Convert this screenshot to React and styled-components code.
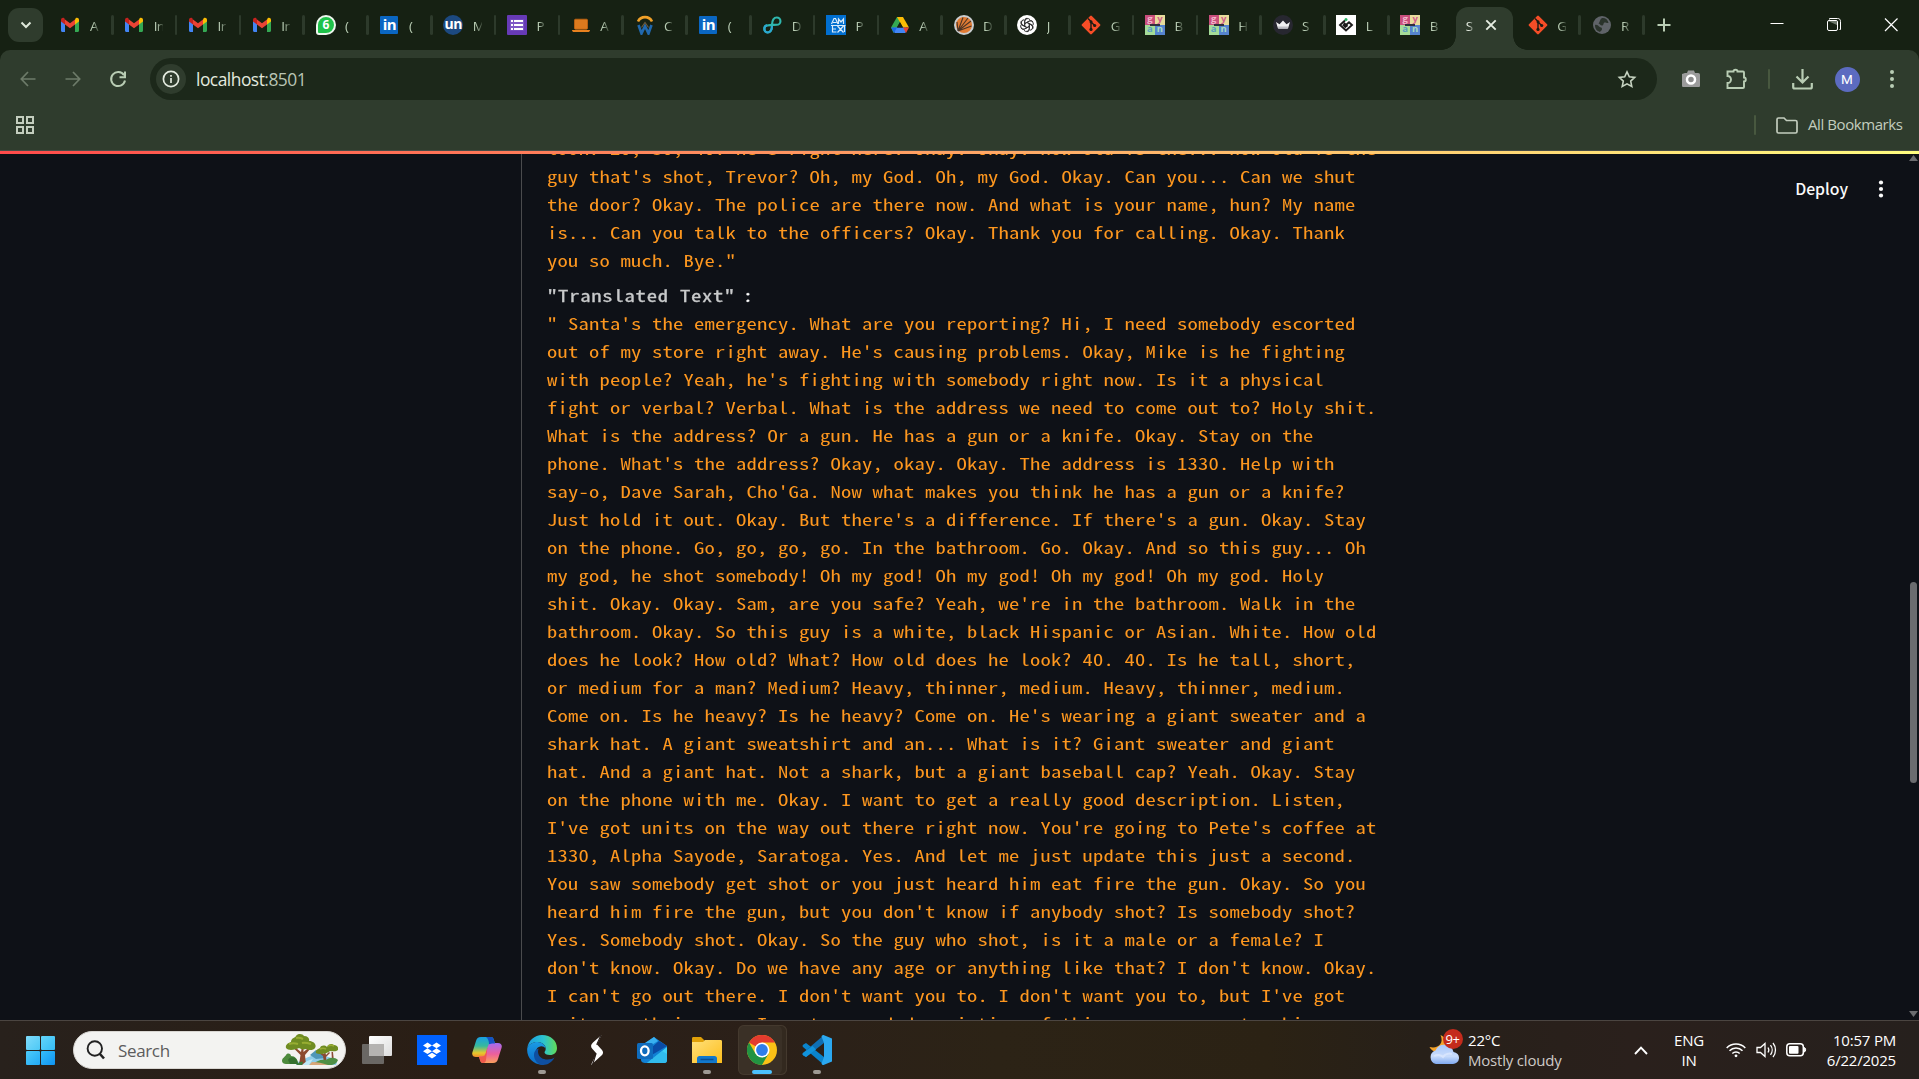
import React from "react";
import styled, { createGlobalStyle, css } from "styled-components";

const UI_FONT = '"Open Sans", "Noto Sans", sans-serif';
const MONO_FONT = '"Noto Sans Mono CJK SC", "DejaVu Sans Mono", monospace';

const Global = createGlobalStyle`
  * { box-sizing: border-box; }
  html, body { margin: 0; padding: 0; background: #0e1117; overflow: hidden; }
  svg { display: block; flex: none; }
`;

const Desktop = styled.div`
  display: flex;
  flex-direction: column;
  width: 1919px;
  height: 1079px;
  overflow: hidden;
  font-family: ${UI_FONT};
`;

/* ---------- browser chrome ---------- */

const TabStrip = styled.div`
  display: flex;
  align-items: center;
  flex: none;
  height: 50px;
  background: #162113;
`;

const TabSearch = styled.div`
  display: grid;
  place-items: center;
  flex: none;
  width: 35px;
  height: 34px;
  margin: 0 6.8px 0 8px;
  border-radius: 11px;
  background: #2f3c2d;
`;

const Tab = styled.div`
  display: flex;
  align-items: center;
  flex: none;
  width: 63.8px;
  height: 50px;
  padding-left: 10.6px;
`;

const TabLabel = styled.span`
  flex: none;
  width: 9px;
  margin-left: 9.5px;
  white-space: nowrap;
  font-size: 13.5px;
  line-height: 20px;
  letter-spacing: -0.6px;
  padding-top: 1px;
  color: #b9cdb4;
  mask-image: linear-gradient(90deg, #000 30%, rgba(0, 0, 0, 0.2));
`;

const TabSeparator = styled.i`
  flex: none;
  width: 2.5px;
  height: 20px;
  margin-left: auto;
  border-radius: 2px;
  background: ${(p) => (p.$hidden ? "transparent" : "#2d3a2b")};
`;

const ActiveTab = styled.div`
  position: relative;
  display: flex;
  align-items: center;
  flex: none;
  width: 57px;
  height: 43px;
  margin: 7px 3.9px 0 2.9px;
  padding: 0 0 7px 9.500px;
  gap: 12.5px;
  border-radius: 12px 12px 0 0;
  background: #2f3c2d;
  &::before, &::after {
    content: "";
    position: absolute;
    bottom: 0;
    width: 14px;
    height: 14px;
  }
  &::before { left: -14px; background: radial-gradient(circle at 0 0, transparent 13.5px, #2f3c2d 14px); }
  &::after { right: -14px; background: radial-gradient(circle at 100% 0, transparent 13.5px, #2f3c2d 14px); }
`;

const ActiveLabel = styled(TabLabel)`
  width: 8px;
  margin: 0 -1px 0 0;
  color: #e3eadf;
`;

const WindowButtons = styled.div`
  display: flex;
  align-items: center;
  margin-left: auto;
  svg { width: 57px; height: 50px; }
`;

const ToolbarBack = styled.div`
  flex: none;
  background: #162113;
`;

const Toolbar = styled.div`
  display: flex;
  align-items: center;
  height: 58px;
  border-radius: 10px 10px 0 0;
  background: #2f3c2d;
`;

const NavButton = styled.div`
  display: grid;
  place-items: center;
  flex: none;
  width: 45px;
`;

const Omnibox = styled.div`
  display: flex;
  align-items: center;
  flex: none;
  width: 1507px;
  height: 42px;
  padding: 0 16px 0 6px;
  margin-left: 10px;
  border-radius: 21px;
  background: #1c281a;
`;

const SiteInfo = styled.div`
  display: grid;
  place-items: center;
  width: 30px;
  height: 30px;
  border-radius: 50%;
  background: #2f3c2d;
`;

const Url = styled.span`
  flex: 1;
  margin-left: 10px;
  font-size: 17.4px;
  line-height: 24px;
  letter-spacing: -0.5px;
  color: #e3eadf;
`;

const Port = styled.span`
  color: #b9c4b4;
`;

const ToolbarItem = styled.div`
  display: grid;
  place-items: center;
  flex: none;
  width: ${(p) => p.$w}px;
`;

const Divider = styled.i`
  flex: none;
  width: 2px;
  height: 20px;
  border-radius: 1px;
  background: #48583f;
`;

const Avatar = styled.div`
  display: grid;
  place-items: center;
  width: 25px;
  height: 25px;
  border-radius: 50%;
  background: #5c6bc0;
  color: #fff;
  font: 13.5px Roboto, sans-serif;
`;

const Bookmarks = styled.div`
  display: flex;
  align-items: center;
  flex: none;
  height: 43px;
  padding: 0 16.5px 8px 14.5px;
  background: #2f3c2d;
  border-bottom: 1px solid #474d47;
`;

const AllBookmarks = styled.div`
  display: flex;
  align-items: center;
  margin-left: auto;
  font-size: 15px;
  line-height: 18px;
  letter-spacing: -0.42px;
  color: #c3cdbe;
  svg { margin: 0 10px 0 20px; }
`;

const BookmarksLabel = styled.span`
  padding-bottom: 2px;
`;

/* ---------- page ---------- */

const Decoration = styled.div`
  flex: none;
  height: 3px;
  background: linear-gradient(90deg, #ff4b4b, #fffd80);
`;

const Page = styled.main`
  display: flex;
  flex: none;
  height: 866px;
  overflow: hidden;
  background: #0e1117;
`;

const JsonViewer = styled.section`
  flex: none;
  width: 862px;
  height: 900px;
  margin-left: 521px;
  padding-left: 25px;
  border-left: 1px solid #4a4b4d;
  font-family: ${MONO_FONT};
`;

/* The mono face is half-width, so each block is stretched to a 10.5px pitch. */
const JsonText = styled.div`
  width: 672px;
  margin-top: ${(p) => p.$top || 0}px;
  font-size: 16.5px;
  line-height: 28px;
  letter-spacing: 0.15px;
  white-space: pre;
  color: #fd971f;
  transform: scaleX(1.25);
  transform-origin: 0 0;
`;

const JsonKey = styled(JsonText)`
  letter-spacing: 0.61px;
  color: #c9cbcc;
  -webkit-text-stroke: 0.3px #c9cbcc;
`;

const Colon = styled.span`
  margin-left: 6px;
  color: #fff;
`;

const PageHeader = styled.header`
  display: flex;
  align-items: flex-start;
  justify-content: flex-end;
  flex: 1;
  padding: 21px 22px 0 0;
  gap: 29px;
`;

const Deploy = styled.span`
  font: 500 15.8px/28px "Noto Sans CJK SC", "Open Sans", sans-serif;
  color: #fafafa;
`;

const ScrollTrack = styled.div`
  display: flex;
  flex-direction: column;
  align-items: center;
  width: 12px;
  padding: 1px 0 3px;
`;

const ScrollThumb = styled.div`
  width: 7px;
  height: 201px;
  margin-top: 421px;
  margin-bottom: auto;
  border-radius: 4px;
  background: #6b6c6f;
`;

/* ---------- taskbar ---------- */

const Taskbar = styled.footer`
  display: flex;
  align-items: center;
  flex: none;
  height: 59px;
  border-top: 1px solid #4b4541;
  background: linear-gradient(90deg, #28211c 0, #2a1e15 24%, #2b2019 40%, #2c2316 52%, #2b2214 66%, #272019 74%, #2a201c 85%, #26201d 100%);
  color: #fff;
`;

const StartButton = styled.div`
  display: grid;
  grid-template-columns: 14px 14px;
  grid-template-rows: 14px 14px;
  gap: 1px;
  margin: 0 18px 0 26px;
`;

const Pane = styled.i`
  border-radius: 1px;
  background: ${(p) => p.$c};
`;

const SearchBox = styled.div`
  display: flex;
  align-items: center;
  flex: none;
  width: 273px;
  height: 38px;
  padding: 0 7px 0 12px;
  margin-right: 3.5px;
  border-radius: 19px;
  background: #f3f3f1;
  border: 1px solid #d8d6d2;
  color: #5c5c5c;
  font-size: 17px;
  letter-spacing: -0.35px;
`;

const SearchText = styled.span`
  flex: 1;
  margin-left: 12px;
`;

const TaskSlot = styled.div`
  display: flex;
  flex-direction: column;
  align-items: center;
  flex: none;
  width: 55px;
  height: 50px;
  padding-top: 10px;
  ${(p) => p.$active && css`
    width: 49px;
    margin: 0 3px;
    padding-right: 1px;
    border-radius: 6px;
    background: #3a3026;
    box-shadow: inset 0 0 0 1px #44392e, inset -5px 0 0 0 #33291f;
  `}
`;

const RunMark = styled.i`
  width: ${(p) => (p.$wide ? 20 : 8)}px;
  height: 4px;
  margin-top: 5px;
  border-radius: 2px;
  background: ${(p) => (p.$wide ? "#4cc2ff" : "#9e9993")};
`;

const Weather = styled.div`
  display: flex;
  align-items: center;
  margin-left: auto;
  width: 205px;
`;

const WeatherIcon = styled.div`
  position: relative;
  width: 30px;
  height: 40px;
  margin-right: 9px;
`;

const Badge = styled.span`
  position: absolute;
  left: 13.5px;
  top: -1px;
  display: grid;
  place-items: center;
  width: 20px;
  height: 20px;
  border-radius: 50%;
  background: #c42b1c;
  color: #fff;
  font-size: 13px;
  letter-spacing: -0.5px;
`;

const Lines = styled.div`
  padding-bottom: 1px;
  font-size: 15px;
  line-height: 20px;
  letter-spacing: -0.2px;
  text-align: ${(p) => p.$align || "left"};
  white-space: nowrap;
  span { display: block; }
  span + span { color: ${(p) => p.$second || "#fff"}; }
`;

const Tray = styled.div`
  display: flex;
  align-items: center;
  flex: none;
  width: 285px;
  padding-right: 23px;
`;

const TrayIcons = styled.div`
  display: flex;
  align-items: center;
  gap: 9.5px;
  margin: 0 auto 0 20px;
`;

const Language = styled(Lines)`
  width: 34px;
  margin-left: 24px;
`;

/* ---------- favicons ---------- */

const Ico = ({ children, size = 20, vb = 20, h }) => (
  <svg width={size} height={h || size} viewBox={`0 0 ${vb} ${vb}`} fill="none">{children}</svg>
);

const Gmail = () => (
  <Ico>
    <path d="M1 5.5v10c0 .8.6 1.5 1.4 1.5H5V8.5z" fill="#4285f4" />
    <path d="M19 5.500v10c0 .8-.6 1.500-1.400 1.500H15V8.500z" fill="#34a853" />
    <path d="M15 4.500v5L19 6.500V4.800c0-1.800-2-2.600-3.300-1.500z" fill="#fbbc04" />
    <path d="M5 9.500v-5l5 3.700 5-3.700v5l-5 3.700z" fill="#ea4335" />
    <path d="M1 4.800v1.700l4 3v-5l-.7-1.200C3 2.200 1 3 1 4.800z" fill="#c5221f" />
  </Ico>
);
const BadgeGlyph = styled.div`
  display: grid;
  place-items: center;
  flex: none;
  width: ${(p) => p.$s || 20}px;
  height: ${(p) => p.$s || 20}px;
  margin: 0 ${(p) => (20 - (p.$s || 20)) / 2}px;
  border-radius: ${(p) => p.$r || 0};
  background: ${(p) => p.$bg};
  color: #fff;
  font: 700 ${(p) => p.$f || 13}px/1 "Open Sans", sans-serif;
  letter-spacing: -0.5px;
  padding-bottom: ${(p) => p.$pb || 0}px;
  border: ${(p) => p.$b || "none"};
`;
const WhatsApp = () => <BadgeGlyph $bg="#1fc24a" $r="50% 50% 50% 15%" $f={12} $b="2px solid #eef6ee">6</BadgeGlyph>;
const LinkedIn = () => <BadgeGlyph $bg="#0a66c2" $r="1px" $f={15} $s={18} $pb={2}>in</BadgeGlyph>;
const Unstop = () => <BadgeGlyph $bg="#1c4980" $r="50%" $f={14} $pb={3}>un</BadgeGlyph>;
const Forms = () => (
  <Ico>
    <rect width="20" height="20" rx="1" fill="#673ab7" />
    <path d="M3 4.500h14v11H3z" fill="#7f58c6" />
    <path d="M4 5h2v2H4zM7 5h9v2H7zM4 9h2v2H4zM7 9h9v2H7zM4 13h2v2H4zM7 13h9v2H7z" fill="#fff" />
  </Ico>
);
const Laptop = () => (
  <Ico>
    <rect x="3.500" y="4.200" width="13" height="10" rx="1" fill="#dc7a1e" stroke="#c46410" strokeWidth=".8" />
    <path d="M1 15h18c0 1.500-1 2-2 2H3c-1 0-2-.500-2-2z" fill="#e8811f" />
  </Ico>
);
const Coursera = () => (
  <Ico>
    <path d="M3 6.500a7.800 7.800 0 0 1 14 0" stroke="#f0a028" strokeWidth="2.600" />
    <path d="M3.500 10l3 8.500L10 11l3.500 7.500 3-8.500" stroke="#2168ae" strokeWidth="2.600" />
    <path d="M6.500 12.500L10 7.500l3.500 5" stroke="#6b5a3c" strokeWidth="1.200" />
  </Ico>
);
const Loop = () => (
  <Ico>
    <path d="M10 10c0-5 2-7.500 4.800-7.500a3.600 3.600 0 0 1 0 7.300C12 10 8 9.600 5.200 10.400a3.600 3.600 0 0 0 .3 7.100C8.500 17.500 10 15 10 10z" stroke="#2fb7ae" strokeWidth="2.100" />
    <path d="M5.200 10.400a3.600 3.600 0 0 0 .3 7.100C8.500 17.500 10 15 10 11" stroke="#2aa7d0" strokeWidth="2.100" />
  </Ico>
);
const Amex = () => (
  <Ico>
    <rect width="20" height="20" fill="#016fd0" />
    <g stroke="#d9ebfa" strokeWidth="1.200">
      <path d="M5.500 9l2.500-5.500h1.500L12 9M7 7.500h3.500M12.500 9V4l2.500 3 2.500-3v5M5 10.500h14.500" />
      <path d="M6.500 11v6h4M6.500 14h3.500M11.500 11l6 6.500M17.500 11l-6 6.500M18.500 11v6" />
    </g>
  </Ico>
);
const Drive = () => (
  <Ico>
    <path d="M7 2h6l-6.500 11-3 5L1 12.500z" fill="#34a853" />
    <path d="M7 2h6l6 10.500h-6z" fill="#fbbc04" />
    <path d="M4 12.500h12L15.500 18h-11z" fill="#4285f4" />
    <path d="M1 12.500h6L4 18z" fill="#1a67e8" />
    <path d="M13 12.500h6L16 18z" fill="#ea4335" />
    <path d="M10 7.300l3 5.200H7z" fill="#162113" />
  </Ico>
);
const OrangeBall = () => (
  <Ico>
    <circle cx="10" cy="10" r="9" fill="#e07b34" stroke="#c9cdd0" strokeWidth="2" />
    <path d="M4 16L17 6M4 16L14 3M4 16L9 2.500M4 16L17.500 11M4 16L3 7" stroke="#4a3426" strokeWidth="1.100" />
  </Ico>
);
const Gpt = () => (
  <Ico>
    <circle cx="10" cy="10" r="10" fill="#fff" />
    <g stroke="#333" strokeWidth="1">
      {[0, 60, 120, 180, 240, 300].map((a) => (
        <path key={a} transform={`rotate(${a} 10 10)`} d="M7.700 11.300V6.200a3 3 0 0 1 5.400-1.400M7.700 8.700l4.600-2.700a3 3 0 0 1 3.800.900" />
      ))}
    </g>
  </Ico>
);
const Git = () => (
  <Ico>
    <rect x="3" y="3" width="14" height="14" rx="1.200" transform="rotate(45 10 10)" fill="#f64d27" />
    <path d="M7 3.500L10 6.500v8M10 7l4 3.800" stroke="#1c1c14" strokeWidth="1.400" />
    <circle cx="10" cy="6.800" r="1.500" fill="#1c1c14" /><circle cx="10" cy="14.400" r="1.600" fill="#1c1c14" /><circle cx="13.700" cy="10.500" r="1.600" fill="#1c1c14" />
  </Ico>
);

const GyanGrid = styled.div`
  display: grid;
  flex: none;
  grid-template-columns: 10px 10px;
  grid-template-rows: 10px 10px;
  width: 20px;
  height: 20px;
`;
const GyanCell = styled.span`
  background: ${(p) => p.$bg};
  color: ${(p) => p.$c};
  font: 700 9.5px/8px "Open Sans", sans-serif;
  text-align: center;
`;
const GyanBar = styled.i`
  grid-column: 1 / 3;
  width: 10px;
  height: 2px;
  margin: -11px auto 0;
  background: #30303c;
`;
const Gyan = () => (
  <GyanGrid>
    <GyanCell $bg="#c94f7c" $c="#f2b6cd">g</GyanCell>
    <GyanCell $bg="#e8dc9c" $c="#d0618c">y</GyanCell>
    <GyanCell $bg="#a5dc98" $c="#5a9cc0">a</GyanCell>
    <GyanCell $bg="#5584cf" $c="#a9dcc0">n</GyanCell>
    <GyanBar />
  </GyanGrid>
);
const Crown = () => (
  <Ico>
    <circle cx="10" cy="10" r="10" fill="#272730" />
    <path d="M3 7l3.500 2.200L10 5.500l3.500 3.700L17 7l-2 6.500H5z" fill="#f0f0f2" />
    <path d="M5 11.500h10l-.5 2.200h-9z" fill="#bdbdc4" />
  </Ico>
);
const Knot = () => (
  <Ico>
    <rect width="20" height="20" fill="#fff" />
    <path d="M9 5.500L4 10l6 5.500 6-5.500-3-2.800-4.500 4M8 8l3.500 3.500M7 9.500l3 3" stroke="#1b1b1b" strokeWidth="1.900" />
    <circle cx="10" cy="4.500" r="1.500" fill="#28b463" />
  </Ico>
);
const Globe = () => (
  <Ico>
    <circle cx="10" cy="10" r="9" fill="#5f6368" />
    <path d="M10 3c3-.5 6 1.500 6.500 5-2 .5-2.500-1-4-.5s-.5 3-2.500 3C8 10.500 8 8.500 6.500 8.500 8 7 8 4 10 3zM3 10c2-.5 3 .5 4 1.500s3 .5 3 2.500-1.500 1.500-2 3C5 16 3 14 3 10z" fill="#1d271b" opacity=".8" />
  </Ico>
);

const TABS = [
  [Gmail, "A"], [Gmail, "In"], [Gmail, "In"], [Gmail, "In"], [WhatsApp, "("], [LinkedIn, "("], [Unstop, "M"],
  [Forms, "P"], [Laptop, "A"], [Coursera, "C"], [LinkedIn, "("], [Loop, "D"], [Amex, "P"], [Drive, "A"],
  [OrangeBall, "D"], [Gpt, "J"], [Git, "G"], [Gyan, "B"], [Gyan, "H"], [Crown, "S"], [Knot, "L"], [Gyan, "B"],
];
const TABS_AFTER = [[Git, "G"], [Globe, "R"]];

const TabItem = ({ icon: Icon, label, last }) => (
  <Tab>
    <Icon />
    <TabLabel>{label}</TabLabel>
    <TabSeparator $hidden={last} />
  </Tab>
);

const Dots = ({ color, r, gap }) => (
  <svg width="8" height="28" viewBox="0 0 8 28" fill={color}>
    <circle cx="4" cy={14 - gap} r={r} /><circle cx="4" cy="14" r={r} /><circle cx="4" cy={14 + gap} r={r} />
  </svg>
);

/* ---------- taskbar icons ---------- */

const Big = ({ children }) => <Ico size={30} vb={30}>{children}</Ico>;

const TaskView = () => (
  <Big>
    <defs><linearGradient id="tv" x1="0" y1="0" x2="1" y2="1"><stop stopColor="#fff" /><stop offset="1" stopColor="#ddd" /></linearGradient></defs>
    <rect x="7" y="1" width="23" height="20" rx="1" fill="url(#tv)" />
    <rect x="0" y="9" width="22" height="20" rx="1" fill="#6a6764" />
    <path d="M7 9h15v12H7z" fill="#b5b3b1" />
  </Big>
);
const Dropbox = () => (
  <Big>
    <rect width="30" height="30" fill="#0061fe" />
    <path d="M10.500 7.500l4.500 2.900-4.500 2.900L6 10.400zM19.500 7.500l4.500 2.900-4.500 2.900-4.500-2.900zM10.500 13.300l4.500 2.900-4.500 2.900L6 16.200zM19.500 13.300l4.500 2.900-4.500 2.900-4.500-2.900zM15 17.700l4.500 2.900-4.500 2.900-4.500-2.900z" fill="#fff" />
  </Big>
);
const Copilot = () => (
  <Big>
    <defs>
      <linearGradient id="cpa" x1="0" y1="0" x2="0" y2="1"><stop stopColor="#189fe4" /><stop offset=".45" stopColor="#37b99c" /><stop offset=".8" stopColor="#e8c92c" /><stop offset="1" stopColor="#f28a2e" /></linearGradient>
      <linearGradient id="cpb" x1="0" y1="0" x2="0" y2="1"><stop stopColor="#a46cf0" /><stop offset=".55" stopColor="#ec5f9c" /><stop offset="1" stopColor="#fba05c" /></linearGradient>
    </defs>
    <path d="M9 2h10c2 0 2.500 1.500 3.200 4l.8 2.500h-3c-2 0-3 1-3.600 3L14 19c-.6 2-1.500 3-4 3H4c-3 0-4.500-2-3.500-5L4 6c.8-2.500 2-4 5-4z" fill="url(#cpa)" />
    <path d="M21 28H11c-2 0-2.500-1.500-3.200-4L7 21.500h3c2 0 3-1 3.600-3L16 11c.6-2 1.500-3 4-3h6c3 0 4.500 2 3.500 5L26 24c-.8 2.500-2 4-5 4z" fill="url(#cpb)" />
    <path d="M14 2h5c2 0 2.500 1.500 3.200 4l.8 2.500h-3l-3 .8c0-3-1-6.300-3-7.300z" fill="#1552c4" />
    <path d="M7 21.500h3c2 0 3-1 3.600-3L15.500 12 14 25c-.3 2-1 3-3 3-3 0-3-3-4-6.500z" fill="#ef5a4c" />
  </Big>
);
const Edge = () => (
  <Big>
    <defs>
      <linearGradient id="ea" x1="0" y1=".5" x2="1" y2=".5"><stop stopColor="#1b9de2" /><stop offset=".55" stopColor="#2cc3d0" /><stop offset="1" stopColor="#62dc56" /></linearGradient>
      <linearGradient id="eb" x1="0" y1="0" x2="0" y2="1"><stop stopColor="#1a9be4" /><stop offset="1" stopColor="#0b6bc8" /></linearGradient>
    </defs>
    <path d="M.3 13C1.500 5.500 7.500 0 15 0c9 0 15 6 15 13 0 4.500-3 7-7 7-3.500 0-5.500-1.200-5.500-2.700 0-1 1.200-1.300 1.200-3.600C18.700 10 15 7 10.500 7 5.500 7 2 9.500.3 13z" fill="url(#ea)" />
    <path d="M.3 13C2 9.500 5.500 7 10.500 7c4.500 0 8 3 8 6.500-1-1.500-2.500-2.200-4-2.200-4 0-6 3.700-6 7.200 0 6 5 10 9 11C7 31-1 23 .3 13z" fill="url(#eb)" />
    <path d="M12 13.500c-2 2-1.500 11 8.500 11 3 0 5.500-1 7-2-2.500 4.800-7 7.500-11.500 7.500-5 0-9.500-5-9-11 .2-2.500 2-5 5-5.500z" fill="#0f4fa0" />
  </Big>
);
const Bolt = () => (
  <Big>
    <path d="M19.500 0L11 7.500c-2.500 2.300-2.500 4.500-.5 6.500l4 4.500-5.500 11.500L19.500 20.500c2-1.800 2-3.500.5-5.500l-5-5.500z" fill="#fff" />
    <path d="M19 0l-4.300 9.800M10.500 30l3.500-11.500" stroke="#2a201c" strokeWidth="1.200" />
  </Big>
);
const Outlook = () => (
  <Big>
    <path d="M4 11L17 2l13 9v14c0 2-1 3-3 3H8c-2 0-4-1-4-3z" fill="#1180d4" />
    <path d="M17 2L5 10v6l16-10z" fill="#38b0f0" /><path d="M22 6L8 18v6L30 11z" fill="#0a4ba6" />
    <path d="M30 12v13c0 2-1 3-3 3H10z" fill="#3fd0f5" /><path d="M10 28L25 16l5 3v6c0 2-1 3-3 3z" fill="#28aee8" opacity=".6" />
    <rect x="0" y="8" width="16" height="16" rx="1.500" fill="#0f6cbd" />
    <ellipse cx="7.800" cy="15.800" rx="3.800" ry="4.500" stroke="#fff" strokeWidth="2.300" />
  </Big>
);
const Explorer = () => (
  <Big>
    <defs><linearGradient id="fx" x1="0" y1="0" x2="1" y2="1"><stop stopColor="#ffe07a" /><stop offset="1" stopColor="#fdbe1c" /></linearGradient></defs>
    <path d="M0 3.500C0 2.500.5 2 1.500 2H9l3.500 3.500V12H0z" fill="#e0a008" />
    <path d="M0 7h11l2-2h15.500c1 0 1.500.5 1.500 1.500V28H0z" fill="url(#fx)" />
    <path d="M5 28v-4.500C5 22 6 21 7.500 21h15c1.500 0 2.500 1 2.500 2.500V28z" fill="#1278cc" />
    <path d="M8.500 24.500h13" stroke="#0a4f94" strokeWidth="1.500" />
  </Big>
);
const Chrome = () => (
  <Big>
    <circle cx="15" cy="15" r="15" fill="#fbc116" />
    <path d="M15 15L2 7.500A15 15 0 0 1 28 7.500H15z" fill="#e33b2e" />
    <path d="M2 7.500A15 15 0 0 0 15 30L21.500 18.700 15 15 8.500 18.700z" fill="#229342" />
    <circle cx="15" cy="15" r="7.500" fill="#fff" /><circle cx="15" cy="15" r="5.900" fill="#2f7de9" />
  </Big>
);
const VsCode = () => (
  <Big>
    <path d="M1.500 9.500L4 8l18 14v8L1 12c-.8-.8-.6-1.800.5-2.500z" fill="#0a84cc" />
    <path d="M1.500 20.500L4 22 22 8V0L1 18c-.8.8-.6 1.800.5 2.500z" fill="#0f6fb4" />
    <path d="M1.500 20.500L4 22 14 14.500 10.500 11 1 18c-.8.8-.6 1.800.5 2.500z" fill="#1193dc" />
    <path d="M21.500 0L30 3.500v23L21.500 30c-1 0-1.500-.5-2-1.500L22 22V8l-2.500-6.500c.5-1 1-1.500 2-1.500z" fill="#2ba8f0" />
  </Big>
);
const TASKS = [
  [TaskView], [Dropbox], [Copilot], [Edge, "run"], [Bolt], [Outlook], [Explorer, "run"], [Chrome, "active"], [VsCode, "run"],
];

const Trees = () => (
  <svg width="56" height="32" viewBox="0 0 56 32" fill="none">
    <path d="M14 29c8-4 13-7 22-9l14 4c5 2 6 4 4 7H14z" fill="#8fcdea" />
    <path d="M28 21l6-5 6 4 4 4-10 1z" fill="#4f97b8" />
    <path d="M0 27c0-3 3-4 4-6 2-3 5-1 5 1 4 0 7 3 7 8H4c-2 0-4-1-4-3z" fill="#4d8a3d" />
    <path d="M6 26c2-4 9-4 10 4H8z" fill="#35702f" />
    <path d="M17 31l1.500-10-6-6 1.500-1 5 4 1-6h1.500v6l6-5 1 1.500L23 21l1 10z" fill="#8d4a2f" />
    <path d="M4 14c-1-4 3-5 5-6 0-4 4-4 5-6 2-3 7-2 8 0 4 0 6 3 5 5 5 0 8 4 6 7-2 3-7 2-9 1-3 1-5 0-7-1-4 2-11 3-13 0z" fill="#6f8c22" />
    <path d="M7 10c3-1 6-1 9 0M14 4c3-1 5 0 7 1M20 9c3-1 6 0 9 1" stroke="#97ad32" strokeWidth="2" />
    <path d="M42 29l-1-7-4-3 1-1 4 2 1-3 1 4 3-3 1 1-4 4 1 7zM50 28l-.5-10h1.500l1 10z" fill="#8a4a34" />
    <path d="M34 19c-1-3 2-4 4-5 1-3 5-3 7-1 1-3 5-4 7-2 3 0 5 3 4 5-2 2-6 1-8 1-3 3-11 4-14 2z" fill="#6f8c22" />
    <path d="M38 15c2-1 4-1 6 0M46 12c2-1 4-1 6 0" stroke="#99ac34" strokeWidth="1.500" />
    <path d="M30 31c4-4 9-6 14-5 4-3 9-3 12 0-1 3-4 5-8 5z" fill="#4f8f45" />
    <path d="M30 28c6 0 10 1 16 3H27z" fill="#d9a77a" /><path d="M20 31c3-3 6-5 11-6l-4 6z" fill="#bfe8f6" />
    <path d="M14 31c3-3 5-4 7-3l-1 3z" fill="#3b7a38" />
  </svg>
);

const CloudIcon = () => (
  <svg width="30" height="40" viewBox="0 0 30 40">
    <defs><linearGradient id="cl" x1="0" y1="0" x2="0" y2="1"><stop stopColor="#a9c8fb" /><stop offset=".6" stopColor="#c9dcfb" /><stop offset="1" stopColor="#7fa9f0" /></linearGradient></defs>
    <path d="M11.500 5c4 9-3 14-11 12 3 6 12 8 18 2 2-5-2-12-7-14z" fill="#f5a32a" />
    <path d="M7 34a7 7 0 0 1-.5-13.500A9.500 9.500 0 0 1 24.500 22a6 6 0 0 1-1 12z" fill="url(#cl)" />
    <path d="M5 26c3-2 7-1 9 1 2-3 6-4 9-3" stroke="#dfeafd" strokeWidth="2" fill="none" opacity=".7" />
  </svg>
);

/* ---------- page content ---------- */

const TRANSCRIPT_TAIL = [
  "look? 20, 30, 40? He's right here. Okay. Okay. How old is the... How old is the",
  "guy that's shot, Trevor? Oh, my God. Oh, my God. Okay. Can you... Can we shut",
  "the door? Okay. The police are there now. And what is your name, hun? My name",
  "is... Can you talk to the officers? Okay. Thank you for calling. Okay. Thank",
  'you so much. Bye."',
];

const TRANSLATED = [
  '" Santa\'s the emergency. What are you reporting? Hi, I need somebody escorted',
  "out of my store right away. He's causing problems. Okay, Mike is he fighting",
  "with people? Yeah, he's fighting with somebody right now. Is it a physical",
  "fight or verbal? Verbal. What is the address we need to come out to? Holy shit.",
  "What is the address? Or a gun. He has a gun or a knife. Okay. Stay on the",
  "phone. What's the address? Okay, okay. Okay. The address is 1330. Help with",
  "say-o, Dave Sarah, Cho'Ga. Now what makes you think he has a gun or a knife?",
  "Just hold it out. Okay. But there's a difference. If there's a gun. Okay. Stay",
  "on the phone. Go, go, go, go. In the bathroom. Go. Okay. And so this guy... Oh",
  "my god, he shot somebody! Oh my god! Oh my god! Oh my god! Oh my god. Holy",
  "shit. Okay. Okay. Sam, are you safe? Yeah, we're in the bathroom. Walk in the",
  "bathroom. Okay. So this guy is a white, black Hispanic or Asian. White. How old",
  "does he look? How old? What? How old does he look? 40. 40. Is he tall, short,",
  "or medium for a man? Medium? Heavy, thinner, medium. Heavy, thinner, medium.",
  "Come on. Is he heavy? Is he heavy? Come on. He's wearing a giant sweater and a",
  "shark hat. A giant sweatshirt and an... What is it? Giant sweater and giant",
  "hat. And a giant hat. Not a shark, but a giant baseball cap? Yeah. Okay. Stay",
  "on the phone with me. Okay. I want to get a really good description. Listen,",
  "I've got units on the way out there right now. You're going to Pete's coffee at",
  "1330, Alpha Sayode, Saratoga. Yes. And let me just update this just a second.",
  "You saw somebody get shot or you just heard him eat fire the gun. Okay. So you",
  "heard him fire the gun, but you don't know if anybody shot? Is somebody shot?",
  "Yes. Somebody shot. Okay. So the guy who shot, is it a male or a female? I",
  "don't know. Okay. Do we have any age or anything like that? I don't know. Okay.",
  "I can't go out there. I don't want you to. I don't want you to, but I've got",
  "units on their way. I want a good description of this guy so we get a him",
];

export default function App() {
  return (
    <Desktop>
      <Global />
      <TabStrip>
        <TabSearch>
          <svg width="12" height="8" viewBox="0 0 12 8" fill="none"><path d="M1.500 1.500L6 6l4.500-4.500" stroke="#dfe8da" strokeWidth="2" /></svg>
        </TabSearch>
        {TABS.map(([icon, label], i) => (
          <TabItem key={i} icon={icon} label={label} last={i === TABS.length - 1} />
        ))}
        <ActiveTab>
          <ActiveLabel>S</ActiveLabel>
          <svg width="12" height="12" viewBox="0 0 12 12"><path d="M1.300 1.300l9.400 9.400M10.700 1.300l-9.400 9.400" stroke="#e6ede2" strokeWidth="1.900" /></svg>
        </ActiveTab>
        {TABS_AFTER.map(([icon, label], i) => <TabItem key={i} icon={icon} label={label} />)}
        <ToolbarItem $w={38}>
          <svg width="14" height="14" viewBox="0 0 14 14"><path d="M7 .500v13M.500 7h13" stroke="#b9cdb4" strokeWidth="2" /></svg>
        </ToolbarItem>
        <WindowButtons>
          <svg viewBox="0 0 57 50"><path d="M22.500 23.500h13" stroke="#fff" /></svg>
          <svg viewBox="0 0 57 50" fill="none"><path d="M24.500 19.500v-1h8c2 0 3 1 3 3v8h-1" stroke="#fff" /><rect x="22.500" y="20.500" width="10" height="10" rx="1.500" stroke="#fff" /><path d="M23 21h9v4z" fill="#6d786b" /></svg>
          <svg viewBox="0 0 57 50"><path d="M23 18.500l12.500 12.500M35.500 18.500L23 31" stroke="#fff" strokeWidth="1.200" /></svg>
        </WindowButtons>
      </TabStrip>

      <ToolbarBack>
        <Toolbar>
          <ToolbarItem $w={5} />
          <NavButton><svg width="16" height="16" viewBox="0 0 16 16" fill="none"><path d="M15.500 8H2M8 1L1.300 8 8 15" stroke="#6d7b69" strokeWidth="1.700" /></svg></NavButton>
          <NavButton><svg width="16" height="16" viewBox="0 0 16 16" fill="none"><path d="M.500 8H14M8 1l6.700 7L8 15" stroke="#6d7b69" strokeWidth="1.700" /></svg></NavButton>
          <NavButton><svg width="18" height="18" viewBox="0 0 18 18" fill="none"><path d="M15 5.200A7 7 0 1 0 16 10.500" stroke="#b9cdb4" strokeWidth="2" /><path d="M16 1.500v5.700h-5.500" stroke="#b9cdb4" strokeWidth="2" /></svg></NavButton>
          <Omnibox>
            <SiteInfo><svg width="18" height="18" viewBox="0 0 18 18" fill="none"><circle cx="9" cy="9" r="7.600" stroke="#e3eadf" strokeWidth="1.700" /><path d="M9 8v5M9 5v1.700" stroke="#e3eadf" strokeWidth="1.700" /></svg></SiteInfo>
            <Url>localhost<Port>:8501</Port></Url>
            <svg width="28" height="28" viewBox="0 0 28 28" fill="none"><path d="M14 6.800l2.300 5 5.400.6-4 3.700 1.100 5.400-4.800-2.700-4.800 2.700 1.100-5.400-4-3.700 5.400-.6z" stroke="#c6d3c1" strokeWidth="1.600" /></svg>
          </Omnibox>
          <ToolbarItem $w={67}>
            <svg width="20" height="18" viewBox="0 0 20 18"><path d="M1 4l3-1 2 0 1-2.500h6L14 3h3c1.500 0 2 .7 2 2v10.500c0 1-.5 1.500-1.500 1.500h-15C1.500 17 1 16.500 1 15.500z" fill="#9b9b9b" /><circle cx="10" cy="9.500" r="4" fill="#8a8a8a" stroke="#fff" strokeWidth="2.500" /></svg>
          </ToolbarItem>
          <ToolbarItem $w={24}>
            <svg width="24" height="24" viewBox="0 0 24 24" fill="none"><path d="M3.500 4.500h6a2 1.800 0 0 1 4 0h5.500c.6 0 1 .4 1 1v5a1.800 2 0 0 1 0 4v5.500c0 .6-.4 1-1 1H3.500V16a3.500 3.500 0 0 0 0-7z" stroke="#b9cdb4" strokeWidth="1.900" /></svg>
          </ToolbarItem>
          <ToolbarItem $w={41}><Divider /></ToolbarItem>
          <ToolbarItem $w={26}>
            <svg width="21" height="21" viewBox="0 0 21 21" fill="none"><path d="M10.500 0v13M4.500 7.500l6 6 6-6M1.200 14v4c0 1 .6 1.500 1.500 1.500h15.600c.9 0 1.500-.5 1.500-1.500v-4" stroke="#b9cdb4" strokeWidth="2.200" /></svg>
          </ToolbarItem>
          <ToolbarItem $w={64}><Avatar>M</Avatar></ToolbarItem>
          <ToolbarItem $w={26}><Dots color="#b9cdb4" r={2} gap={7} /></ToolbarItem>
        </Toolbar>
      </ToolbarBack>

      <Bookmarks>
        <svg width="20" height="20" viewBox="0 0 20 20" fill="none"><path d="M2 2h6v6H2zM12 2h6v6h-6zM2 12h6v6H2zM12 12h6v6h-6z" stroke="#c3cdbe" strokeWidth="2" /></svg>
        <AllBookmarks>
          <Divider />
          <svg width="22" height="17" viewBox="0 0 22 17" fill="none"><path d="M1 2.500C1 1.500 1.500 1 2.500 1H8l2.500 2.500h9c1 0 1.500.5 1.500 1.500v9.500c0 1-.5 1.500-1.500 1.500h-17C1.500 16 1 15.500 1 14.500z" stroke="#c3cdbe" strokeWidth="1.700" /></svg>
          <BookmarksLabel>All Bookmarks</BookmarksLabel>
        </AllBookmarks>
      </Bookmarks>

      <Decoration />
      <Page>
        <JsonViewer>
          <JsonText $top={-20}>{TRANSCRIPT_TAIL.join("\n")}</JsonText>
          <JsonKey $top={7}>"Translated Text"<Colon>:</Colon></JsonKey>
          <JsonText>{TRANSLATED.join("\n")}</JsonText>
        </JsonViewer>
        <PageHeader>
          <Deploy>Deploy</Deploy>
          <Dots color="#fafafa" r={2.1} gap={6.5} />
        </PageHeader>
        <ScrollTrack>
          <svg width="9" height="6" viewBox="0 0 9 6"><path d="M4.500 0L9 6H0z" fill="#6b6c6f" /></svg>
          <ScrollThumb />
          <svg width="9" height="6" viewBox="0 0 9 6"><path d="M4.500 6L9 0H0z" fill="#6b6c6f" /></svg>
        </ScrollTrack>
      </Page>

      <Taskbar>
        <StartButton>
          <Pane $c="linear-gradient(135deg,#7fdcfb,#4cc8f6)" /><Pane $c="linear-gradient(135deg,#63d5fa,#35bdf7)" />
          <Pane $c="linear-gradient(135deg,#4ccbfa,#22a9f5)" /><Pane $c="linear-gradient(135deg,#35bdf9,#0f94f2)" />
        </StartButton>
        <SearchBox>
          <svg width="20" height="20" viewBox="0 0 20 20" fill="none"><circle cx="8.800" cy="8.500" r="7.200" stroke="#222" strokeWidth="1.900" /><path d="M13.500 13.500l4.500 5" stroke="#222" strokeWidth="2.600" /></svg>
          <SearchText>Search</SearchText>
          <Trees />
        </SearchBox>
        {TASKS.map(([Icon, state], i) => (
          <TaskSlot key={i} $active={state === "active"}>
            <Icon />
            {state && <RunMark $wide={state === "active"} />}
          </TaskSlot>
        ))}
        <Weather>
          <WeatherIcon><CloudIcon /><Badge>9+</Badge></WeatherIcon>
          <Lines $second="#cfcac7"><span>22°C</span><span>Mostly cloudy</span></Lines>
        </Weather>
        <Tray>
          <svg width="14" height="9" viewBox="0 0 14 9" fill="none"><path d="M1 8l6-6.300L13 8" stroke="#fff" strokeWidth="1.900" /></svg>
          <Language $align="center"><span>ENG</span><span>IN</span></Language>
          <TrayIcons>
            <svg width="20" height="16" viewBox="0 0 20 16" fill="none" stroke="#fff" strokeWidth="1.500"><path d="M.700 6a13 13 0 0 1 18.600 0M3.500 8.800a9 9 0 0 1 13 0M6.300 11.500a5.300 5.300 0 0 1 7.400 0" /><circle cx="10" cy="13.800" r="1.400" fill="#fff" stroke="none" /></svg>
            <svg width="21" height="18" viewBox="0 0 21 18" fill="none" stroke="#fff" strokeWidth="1.300"><path d="M1 6.500h3.500L9 2.500v13L4.500 11.500H1zM12 6.500c1 1.500 1 3.500 0 5M14.500 4.200c2.200 2.800 2.200 6.800 0 9.600M17 2c3.300 4 3.300 10 0 14" /></svg>
            <svg width="21" height="14" viewBox="0 0 21 14" fill="none"><rect x=".8" y=".8" width="16.500" height="12" rx="3" stroke="#fff" strokeWidth="1.500" /><rect x="3" y="3" width="9.500" height="7.700" rx="1" fill="#fff" /><path d="M18.300 4.500c1.800.3 1.800 4.200 0 4.500z" fill="#fff" stroke="#fff" /></svg>
          </TrayIcons>
          <Lines $align="right"><span>10:57 PM</span><span>6/22/2025</span></Lines>
        </Tray>
      </Taskbar>
    </Desktop>
  );
}
